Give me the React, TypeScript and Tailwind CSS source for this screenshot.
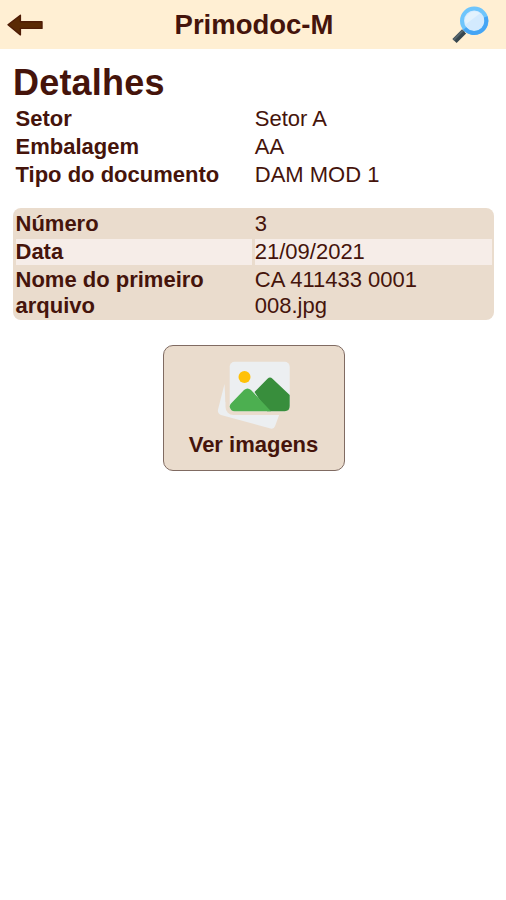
import React from 'react';

const details = [
  { label: 'Setor', value: 'Setor A' },
  { label: 'Embalagem', value: 'AA' },
  { label: 'Tipo do documento', value: 'DAM MOD 1' }
];

const fields = [
  { label: 'Número', value: '3' },
  { label: 'Data', value: '21/09/2021' },
  { label: 'Nome do primeiro arquivo', value: 'CA 411433 0001 008.jpg' }
];

function BackArrow() {
  return (
    <svg className="w-[38px] h-6" viewBox="0 0 38 24" aria-hidden="true">
      <path
        d="M2 11.8 14.4 2.2v6.5H36v6.7H14.4v6.5z"
        fill="#5a2a04"
        stroke="#4f1c06"
        strokeWidth="1.4"
        strokeLinejoin="round"
      />
    </svg>
  );
}

function SearchIcon() {
  return (
    <svg className="w-10 h-10" viewBox="0 0 40 40" aria-hidden="true">
      <path d="M16.5 23 11 28.5" stroke="#8d9ba3" strokeWidth="3.5" />
      <path d="M14 26.5 4.5 36" stroke="#37464e" strokeWidth="6" />
      <path d="M12.8 25.5 3.5 35" stroke="#55656d" strokeWidth="2" />
      <circle cx="24.2" cy="15.8" r="12.2" fill="#d3eafe" stroke="#6ec5fc" strokeWidth="4" />
      <path d="M14.7 23.5A12.2 12.2 0 0 0 35.7 11.8" fill="none" stroke="#45a5f5" strokeWidth="4" />
      <path d="M15.7 19.3a9.5 9.5 0 0 1 14.5-11z" fill="#e3f2fd" />
    </svg>
  );
}

function ImagesIcon() {
  return (
    <svg className="w-[74px] h-[70px]" viewBox="0 0 74 70" aria-hidden="true">
      <path d="M7.5 24 1 49.5q-.8 4 3 5.5L53.5 68.5q3.5.8 4.5-2.3L62.5 54l-10-8-44-4z" fill="#eceff1" />
      <rect x="8.5" y="-2" width="69" height="57" rx="8" fill="#eadccd" />
      <rect x="12.7" y="1.7" width="60" height="49.5" rx="5" fill="#eceff1" />
      <circle cx="27.5" cy="17" r="6" fill="#ffc107" />
      <path d="M37.5 32 50.5 18.8q2.5-2.5 5 0L72.7 35v11q0 5.2-5 5.2H50z" fill="#388e3c" />
      <path d="M14 43.5 27 30q3.5-3.2 7 0L54 51.2H17.7q-4 0-5-4.2-.2-2 1.3-3.5z" fill="#4caf50" />
    </svg>
  );
}

export default function App() {
  return (
    <div className="min-h-screen bg-white font-['Liberation_Sans',Arial,sans-serif] text-[#45140b]">
      <header className="grid h-[49px] grid-cols-[1fr_auto_1fr] items-center bg-[#ffefd3] pl-1.5 pr-4 text-center">
        <button className="w-[38px]" aria-label="Voltar">
          <BackArrow />
        </button>
        <h1 className="pl-3 text-[27.5px] font-bold leading-none">Primodoc-M</h1>
        <button className="w-10 justify-self-end" aria-label="Buscar">
          <SearchIcon />
        </button>
      </header>

      <main className="pl-[13px] pr-3 pt-3.5">
        <h2 className="text-4xl font-bold leading-[40px] tracking-[0.2px]">Detalhes</h2>

        <dl className="grid gap-[2.5px] px-[2.5px] pt-[3px]">
          {details.map((item) => (
            <div key={item.label} className="grid grid-cols-2 gap-[2.5px] text-[22px] leading-[25.5px]">
              <dt className="font-bold">{item.label}</dt>
              <dd>{item.value}</dd>
            </div>
          ))}
        </dl>

        <dl className="mt-5 grid gap-[2.5px] rounded-lg bg-[#eadccd] px-[2.5px] pt-[3.5px] pb-[2px]">
          {fields.map((item) => (
            <div key={item.label} className="group grid grid-cols-2 gap-[2.5px] text-[22px] leading-[25.5px]">
              <dt className="pr-8 font-bold group-even:bg-[#f6ede8]">{item.label}</dt>
              <dd className="pr-16 group-even:bg-[#f6ede8]">{item.value}</dd>
            </div>
          ))}
        </dl>

        <button className="mx-auto mt-[24.5px] flex h-[126px] w-[182px] flex-col items-center rounded-[10px] border border-[#806b62] bg-[#eadccd] pt-3.5">
          <ImagesIcon />
          <span className="mt-0.5 text-[22px] font-bold leading-[26px]">Ver imagens</span>
        </button>
      </main>
    </div>
  );
}
